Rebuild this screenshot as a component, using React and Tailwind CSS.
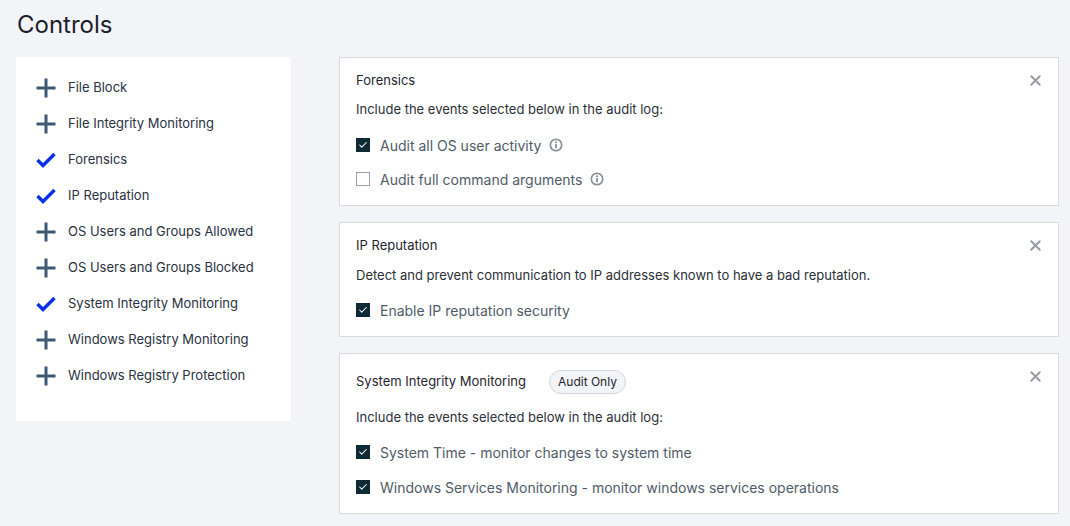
import { Check, X } from 'lucide-react'

const CONTROLS = [
  { name: 'File Block', on: false },
  { name: 'File Integrity Monitoring', on: false },
  { name: 'Forensics', on: true },
  { name: 'IP Reputation', on: true },
  { name: 'OS Users and Groups Allowed', on: false },
  { name: 'OS Users and Groups Blocked', on: false },
  { name: 'System Integrity Monitoring', on: true },
  { name: 'Windows Registry Monitoring', on: false },
  { name: 'Windows Registry Protection', on: false },
]

function PlusMark() {
  return (
    <svg width="20" height="20" viewBox="0 0 20 20" className="text-[#3f5873]">
      <path d="M10 0.5v19M0.5 10h19" stroke="currentColor" strokeWidth="3" fill="none" />
    </svg>
  )
}

function TickMark() {
  return (
    <svg width="20" height="16" viewBox="0 0 20 16" className="text-[#0a31e8]">
      <path d="M1.5 8l5.5 5.5L18.5 2" stroke="currentColor" strokeWidth="3.4" fill="none" strokeLinejoin="miter" />
    </svg>
  )
}

function InfoIcon() {
  return (
    <svg width="14" height="14" viewBox="0 0 16 16" className="text-[#8d939b]">
      <circle cx="8" cy="8" r="6.5" fill="none" stroke="currentColor" strokeWidth="2" />
      <rect x="6.9" y="6.9" width="2.2" height="4.9" rx="0.6" fill="currentColor" />
      <circle cx="8" cy="4.9" r="1.2" fill="currentColor" />
    </svg>
  )
}

function Box({ checked }) {
  return checked ? (
    <span className="w-[14px] h-[14px] bg-[#0e2a33] flex items-center justify-center shrink-0">
      <Check size={10} strokeWidth={2.5} className="text-white" />
    </span>
  ) : (
    <span className="w-[14px] h-[14px] border border-[#9aa1ab] bg-white shrink-0" />
  )
}

function Row({ checked, label, info, className = '' }) {
  return (
    <div className={`h-7 flex items-center ${className}`}>
      <Box checked={checked} />
      <span className="ml-[10px] text-[14px] text-[#505b68]">{label}</span>
      {info && <span className="ml-[8px] flex"><InfoIcon /></span>}
    </div>
  )
}

function Card({ title, badge, children, className = '' }) {
  return (
    <div className={`relative bg-white border border-[#d9dbdf] pl-4 pr-[18px] ${className}`}>
      <button className="absolute right-[14px] top-[14px] text-[#979ca4]">
        <X size={17} strokeWidth={2.7} />
      </button>
      {badge ? (
        <div className="h-6 flex items-center">
          <span className="text-[13px] text-[#1f2530]">{title}</span>
          <span className="ml-[23px] h-6 px-2 flex items-center rounded-full border border-[#d3d6db] bg-[#f3f4f7] text-[12px] text-[#1f2530]">{badge}</span>
        </div>
      ) : (
        <div className="h-5 flex items-center text-[13px] text-[#1f2530]">{title}</div>
      )}
      {children}
    </div>
  )
}

export default function App() {
  return (
    <div className="min-h-[526px] bg-[#f3f4f8] font-['Inter','Liberation_Sans',sans-serif]">
      <h1 className="pl-[17px] pt-[9px] h-[57px] text-[24px] leading-[32px] text-[#1a1f2b]">Controls</h1>
      <div className="flex items-start pl-4">
        <div className="w-[275px] bg-white pt-[13px] pb-[27px] pl-5">
          {CONTROLS.map(c => (
            <div key={c.name} className="h-9 flex items-center gap-3">
              <span className="w-5 flex justify-center">
                {c.on ? <TickMark /> : <PlusMark />}
              </span>
              <span className="text-[13px] text-[#2a3140]">{c.name}</span>
            </div>
          ))}
        </div>

        <div className="ml-12 w-[720px] flex flex-col gap-4">
          <Card title="Forensics" className="pt-[13px] pb-3">
            <p className="mt-2 h-5 leading-5 text-[13px] text-[#2b2f36]">Include the events selected below in the audit log:</p>
            <Row checked label="Audit all OS user activity" info className="mt-3" />
            <Row checked={false} label="Audit full command arguments" info className="mt-[6px]" />
          </Card>

          <Card title="IP Reputation" className="pt-[13px] pb-3">
            <p className="mt-[9px] h-5 leading-5 text-[13px] text-[#2b2f36]">Detect and prevent communication to IP addresses known to have a bad reputation.</p>
            <Row checked label="Enable IP reputation security" className="mt-[11px]" />
          </Card>

          <Card title="System Integrity Monitoring" badge="Audit Only" className="pt-4 pb-3">
            <p className="mt-[13px] h-5 leading-5 text-[13px] text-[#2b2f36]">Include the events selected below in the audit log:</p>
            <Row checked label="System Time - monitor changes to system time" className="mt-[11px]" />
            <Row checked label="Windows Services Monitoring - monitor windows services operations" className="mt-[7px]" />
          </Card>
        </div>
      </div>
    </div>
  )
}
